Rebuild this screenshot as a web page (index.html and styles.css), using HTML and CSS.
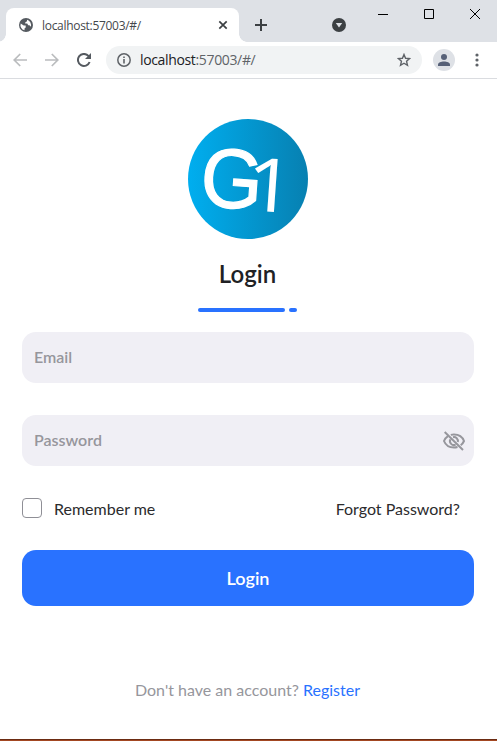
FILE: index.html
```html
<!DOCTYPE html>
<html lang="en">
<head>
<meta charset="utf-8">
<title>Login</title>
<link rel="stylesheet" href="styles.css">
</head>
<body>
<div class="window">
  <header class="tabstrip">
    <div class="tab">
      <svg class="globe" width="14" height="14" viewBox="0 0 14 14"><circle cx="7" cy="7" r="7" fill="#555a60"/><path d="M1.700 5.500 4.700 7.500h2v2l-1.200 1v1.800A5.400 5.400 0 0 1 1.700 5.500ZM8 1.700v1.500L6.200 4.400v1.200h2l1 1.700h1.300l1.200 1.500A5.400 5.400 0 0 0 8 1.700Z" fill="#fff"/></svg>
      <span class="tab-title">localhost:57003/#/</span>
      <svg class="tab-close" width="10" height="10" viewBox="0 0 10 10"><path d="m1.300 1.300 7.400 7.400m0-7.400-7.400 7.400" stroke="#3c4043" stroke-width="1.700"/></svg>
    </div>
    <svg class="new-tab" width="12" height="12" viewBox="0 0 12 12"><path d="M6 0v12M0 6h12" stroke="#3c4043" stroke-width="2"/></svg>
    <svg class="tab-search" width="14" height="14" viewBox="0 0 14 14"><circle cx="7" cy="7" r="7" fill="#3c4043"/><path d="M3.800 5h6.400L7 9.600Z" fill="#dee1e6"/></svg>
    <div class="caption">
      <svg width="10" height="10" viewBox="0 0 10 10"><path d="M0 5.500h10" stroke="#000"/></svg>
      <svg width="10" height="10" viewBox="0 0 10 10"><path d="M.5.5h9v9h-9Z" fill="none" stroke="#000"/></svg>
      <svg width="10" height="10" viewBox="0 0 10 10"><path d="m0 0 10 10M10 0 0 10" stroke="#000"/></svg>
    </div>
  </header>
  <nav class="toolbar">
    <svg class="back" width="14" height="14" viewBox="0 0 14 14"><path d="M14 7H1.500M7.200 1l-6 6 6 6" fill="none" stroke="#babcbe" stroke-width="1.700"/></svg>
    <svg class="forward" width="14" height="14" viewBox="0 0 14 14"><path d="M0 7h12.500M6.800 1l6 6-6 6" fill="none" stroke="#babcbe" stroke-width="1.700"/></svg>
    <svg class="reload" width="14" height="14" viewBox="0 0 14 14"><path d="M12.600 9A6 6 0 1 1 11.400 2.900L13 4.500" fill="none" stroke="#555a60" stroke-width="2"/><path d="M14 0v6H8Z" fill="#555a60"/></svg>
    <div class="address">
      <svg class="info" width="14" height="14" viewBox="0 0 14 14"><circle cx="7" cy="7" r="6.200" fill="none" stroke="#5f6368" stroke-width="1.500"/><path d="M7 6v4.500M7 3.400V5" stroke="#5f6368" stroke-width="1.600"/></svg>
      <span class="url">localhost<span class="url-rest">:57003/#/</span></span>
      <svg class="star" width="14" height="14" viewBox="0 0 14 14"><path d="m7 1.500 1.550 3.800 4.100.3-3.100 2.700.95 4L7 10.200l-3.500 2.100.95-4-3.100-2.700 4.100-.3Z" fill="none" stroke="#5f6368" stroke-width="1.400"/></svg>
    </div>
    <svg class="avatar" width="22" height="22" viewBox="0 0 22 22"><circle cx="11" cy="11" r="11" fill="#dee1e6"/><circle cx="11" cy="8" r="3" fill="#566077"/><path d="M5 17v-1.400c0-2 3-3.200 6-3.200s6 1.200 6 3.200V17Z" fill="#566077"/></svg>
    <svg class="kebab" width="4" height="14" viewBox="0 0 4 14"><g fill="#5f6368"><circle cx="2" cy="2" r="1.600"/><circle cx="2" cy="7" r="1.600"/><circle cx="2" cy="12" r="1.600"/></g></svg>
  </nav>
  <main class="page">
    <svg class="logo" width="120" height="120" viewBox="0 0 120 120">
      <defs><linearGradient id="disc"><stop offset="0" stop-color="#00aeef"/><stop offset="1" stop-color="#0780b1"/></linearGradient></defs>
      <circle cx="60" cy="60" r="60" fill="url(#disc)"/>
      <text class="logo-g" transform="translate(11 86.500) rotate(4) scale(.95 1)">G</text>
      <text class="logo-one" transform="translate(56.500 91) rotate(4) scale(1.150 1.020)">1</text>
    </svg>
    <h1 class="title">Login</h1>
    <div class="rule"><span class="rule-long"></span><span class="rule-dot"></span></div>
    <form class="form">
      <div class="field">Email</div>
      <div class="field">Password
        <svg class="eye" width="24" height="24" viewBox="0 0 24 24"><g fill="none" stroke="#96969c" stroke-width="2"><path d="M8.800 5.900A11 10 0 0 1 12 5.500c4.600 0 8.400 2.300 10 6.500a10.500 10 0 0 1-3.300 4.200M15.500 18A11 10 0 0 1 12 18.500c-4.600 0-8.400-2.300-10-6.500a11 10 0 0 1 3.700-4.600M11 8.200a4 4 0 0 1 4.800 4.800M13.600 15.700A4 4 0 0 1 8.300 10.400M2.700 3l18.300 18"/></g></svg>
      </div>
      <div class="options">
        <label class="remember"><span class="box"></span>Remember me</label>
        <a class="forgot">Forgot Password?</a>
      </div>
      <button class="submit" type="button">Login</button>
    </form>
    <p class="signup">Don't have an account? <a class="register">Register</a></p>
  </main>
  <div class="edge"></div>
</div>
</body>
</html>
```
FILE: styles.css
```css
* { box-sizing: border-box; }
body { margin: 0; background: #fff; font-family: Lato, sans-serif; }
svg { display: block; flex: none; }
.window { height: 741px; display: flex; flex-direction: column; overflow: hidden; }
.tabstrip { height: 42px; flex: none; background: #dee1e6; display: flex; align-items: flex-start; padding-left: 6px; }
.tab { position: relative; width: 233px; height: 34px; margin-top: 8px; background: #fff; border-radius: 8px 8px 0 0; display: flex; align-items: center; padding: 0 11px 0 13px; font-family: "Open Sans", sans-serif; }
.tab::before, .tab::after { content: ""; position: absolute; bottom: 0; width: 8px; height: 8px; }
.tab::before { left: -8px; background: radial-gradient(circle at 0 0, transparent 7.5px, #fff 8px); }
.tab::after { right: -8px; background: radial-gradient(circle at 100% 0, transparent 7.5px, #fff 8px); }
.tab-title { margin-left: 9px; font-size: 12px; letter-spacing: -.3px; color: #45484c; white-space: nowrap; }
.tab-close { margin-left: auto; }
.new-tab { margin: 19px 0 0 16px; }
.tab-search { margin: 18px 0 0 65px; }
.caption { display: flex; gap: 36px; margin: 9px 0 0 32px; }
.toolbar { height: 37px; flex: none; display: flex; align-items: center; padding: 0 18px 1px 13px; border-bottom: 1px solid #dadce0; }
.forward { margin-left: 18px; }
.reload { margin-left: 18px; }
.address { width: 316px; height: 28px; margin-left: 15px; border-radius: 14px; background: #f1f3f4; display: flex; align-items: center; padding: 0 11px; }
.url { margin-left: 9px; font: 14px "Open Sans", sans-serif; letter-spacing: -.35px; color: #202124; }
.url-rest { color: #5f6368; }
.star { margin-left: auto; }
.avatar { margin-left: 11px; }
.kebab { margin-left: 20px; }
.page { flex: 1; padding: 40px 23px 0 22px; display: flex; flex-direction: column; align-items: center; }
.logo-g { font: 84px "Liberation Sans", sans-serif; fill: #fff; stroke: #fff; stroke-width: 1.2px; }
.logo-one { font: 73px "Open Sans", sans-serif; fill: #fff; }
.title { margin: 20px 1px 0 0; font-size: 24px; line-height: 30px; font-weight: 600; color: #202124; }
.rule { display: flex; gap: 4px; margin-top: 19px; width: 100px; }
.rule span { height: 4px; border-radius: 2px; background: #2972ff; }
.rule-long { width: 87px; }
.rule-dot { width: 8px; }
.form { width: 452px; margin-top: 20px; }
.field { height: 51px; border-radius: 14px; background: #f0eff5; color: #96969c; font-size: 16px; font-weight: 600; display: flex; align-items: center; justify-content: space-between; padding: 0 8px 2px 12px; }
.field + .field { margin-top: 32px; }
.eye { margin-top: 2px; }
.options { height: 20px; margin-top: 32px; display: flex; align-items: center; justify-content: space-between; padding-right: 14px; font-size: 16px; color: #2b2b2d; }
.remember { display: flex; align-items: center; }
.box { width: 20px; height: 20px; border: 1.5px solid #8f8f96; border-radius: 4px; margin-right: 12px; }
.submit { display: block; width: 452px; height: 56px; margin-top: 32px; border: 0; border-radius: 14px; background: #2972ff; color: #fff; font: 600 18px Lato, sans-serif; }
.signup { margin: 74px 1px 0 0; font-size: 16px; line-height: 20px; color: #96969c; }
.register { color: #2972ff; }
.edge { height: 2px; flex: none; background: #a34822; border-top: 1px solid #6b2b12; }
```
